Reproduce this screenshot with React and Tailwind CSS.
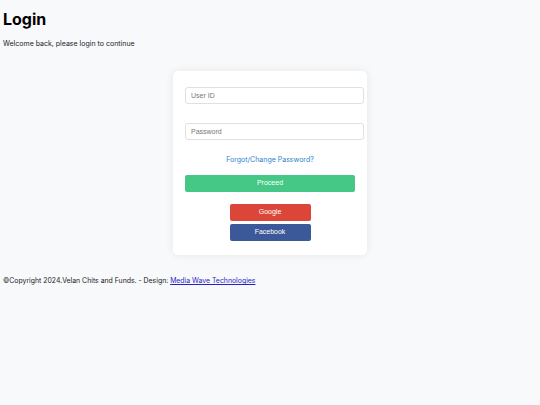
import React from 'react';

const App = () => {
  return (
    <div className="min-h-[405px] w-full bg-[#f8f9fb] px-[3px] pt-[9px] font-['Inter',sans-serif] text-black">
      <h1 className="text-[16px] font-bold leading-[20px]">Login</h1>
      <p className="mt-[10px] text-[7px] leading-[10px] text-[#222]">Welcome back, please login to continue</p>

      <div className="mt-[22px] flex justify-center">
        <div className="w-[194px] rounded-[5px] bg-white px-[12px] pt-[16px] pb-[14px] shadow-[0_0_8px_rgba(0,0,0,0.08)]">
          <input
            type="text"
            placeholder="User ID"
            className="block h-[17px] w-[179px] rounded-[3px] border border-[#e0e0e0] px-[5px] font-['Liberation_Sans',sans-serif] text-[7px] placeholder:text-[#777] outline-none"
          />
          <input
            type="password"
            placeholder="Password"
            className="mt-[19px] block h-[17px] w-[179px] rounded-[3px] border border-[#e0e0e0] px-[5px] font-['Liberation_Sans',sans-serif] text-[7px] placeholder:text-[#777] outline-none"
          />
          <div className="mt-[15px] text-center text-[7px] leading-[10px]">
            <a href="#" className="text-[#2f7fd1]">Forgot/Change Password?</a>
          </div>
          <button className="mt-[10px] block h-[17px] w-full rounded-[2px] bg-[#45c785] font-['Liberation_Sans',sans-serif] text-[7px] text-white">
            Proceed
          </button>
          <div className="mt-[12px] flex flex-col items-center gap-[3px]">
            <button className="h-[17px] w-[81px] rounded-[2px] bg-[#dc4638] font-['Liberation_Sans',sans-serif] text-[7px] text-white">
              Google
            </button>
            <button className="h-[17px] w-[81px] rounded-[2px] bg-[#3b5998] font-['Liberation_Sans',sans-serif] text-[7px] text-white">
              Facebook
            </button>
          </div>
        </div>
      </div>

      <p className="mt-[21px] text-[6.9px] leading-[10px] text-[#222]">
        ©Copyright 2024.Velan Chits and Funds. - Design: <a href="#" className="text-[#2a1fc4] underline">Media Wave Technologies</a>
      </p>
    </div>
  );
};

export default App;
